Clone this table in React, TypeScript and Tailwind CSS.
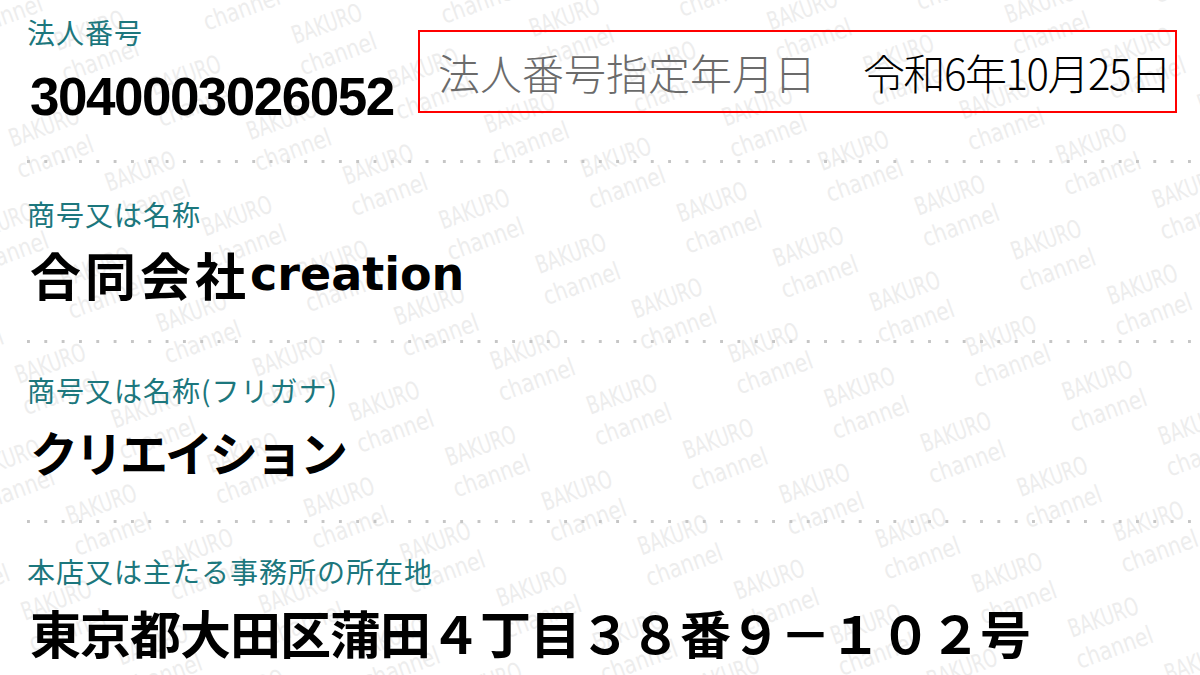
import React from "react";

function Watermark() {
  const items: Array<[number, number]> = [];
  for (let i = -14; i <= 14; i++) {
    for (let j = -14; j <= 14; j++) {
      const x = 717.5 + i * 141.4 + j * 96.3;
      const y = 216.7 - i * 51.5 + j * 44.6;
      if (x > -140 && x < 1340 && y > -90 && y < 770) items.push([x, y]);
    }
  }
  return (
    <svg className="absolute left-0 top-0" width="1200" height="675" aria-hidden="true">
      {items.map(([x, y], k) => (
        <g
          key={k}
          transform={`translate(${x.toFixed(1)} ${y.toFixed(1)}) rotate(-20)`}
          fill="#ededed"
          fontFamily="'Liberation Sans Narrow','DejaVu Sans Condensed','Liberation Sans',sans-serif"
          fontSize="25"
        >
          <text x="-36.5" y="-7" textLength="73" lengthAdjust="spacingAndGlyphs">
            BAKURO
          </text>
          <text x="-40" y="25" textLength="80" lengthAdjust="spacingAndGlyphs">
            channel
          </text>
        </g>
      ))}
    </svg>
  );
}

function Sep({ className }: { className: string }) {
  return (
    <div
      className={`ml-[-3px] h-[3px] bg-[linear-gradient(to_right,#c6c6c6_0_3px,transparent_3px)] bg-[length:17.33px_3px] bg-repeat-x ${className}`}
    />
  );
}

function Label({ children, className }: { children: React.ReactNode; className: string }) {
  return (
    <div
      className={`ml-[-3px] h-[28px] whitespace-nowrap font-['Noto_Sans_CJK_JP',sans-serif] text-[28px] leading-[28px] tracking-[1px] text-[#1c777d] ${className}`}
    >
      {children}
    </div>
  );
}

export default function App() {
  return (
    <div className="relative h-[675px] w-[1200px] overflow-hidden bg-white">
      <Watermark />
      <div className="relative pl-[30px]">
        {/* Row 1 */}
        <div className="flex items-start">
          <div className="w-[388px] shrink-0">
            <Label className="mt-[18px]">法人番号</Label>
            <div className="mt-[21px] h-[60px] whitespace-nowrap font-['Liberation_Sans',Arial,sans-serif] text-[53px] font-bold leading-[60px] tracking-[-1.5px] text-black">
              3040003026052
            </div>
          </div>
          <div className="mt-[30px] flex h-[83px] w-[759px] items-center border-2 border-[#ff0000] pl-[18px] font-['Noto_Sans_CJK_JP',sans-serif] text-[42px] font-light leading-[50px] whitespace-nowrap">
            <span className="text-[#6b6b6b]">法人番号指定年月日</span>
            <span className="ml-[47px] tracking-[-1.5px] text-black">令和6年10月25日</span>
          </div>
        </div>
        <Sep className="mt-[33px]" />

        {/* Row 2 */}
        <Label className="mt-[37px]">商号又は名称</Label>
        <div className="mt-[16px] flex h-[60px] items-center whitespace-nowrap leading-[60px] text-black">
          <span className="font-['Noto_Sans_CJK_JP',sans-serif] text-[51px] font-bold tracking-[4px]">合同会社</span>
          <span className="font-['DejaVu_Sans',sans-serif] text-[46px] font-bold">creation</span>
        </div>
        <Sep className="mt-[36px]" />

        {/* Row 3 */}
        <Label className="mt-[33px]">商号又は名称(フリガナ)</Label>
        <div className="mt-[17px] h-[60px] whitespace-nowrap font-['Noto_Sans_CJK_JP',sans-serif] text-[48px] font-bold leading-[60px] tracking-[-3px] text-black">
          クリエイション
        </div>
        <Sep className="mt-[39px]" />

        {/* Row 4 */}
        <Label className="mt-[34px]">本店又は主たる事務所の所在地</Label>
        <div className="mt-[17px] h-[60px] whitespace-nowrap font-['Noto_Sans_CJK_JP',sans-serif] text-[51px] font-bold leading-[60px] tracking-[-1px] text-black">
          東京都大田区蒲田４丁目３８番９－１０２号
        </div>
      </div>
    </div>
  );
}
